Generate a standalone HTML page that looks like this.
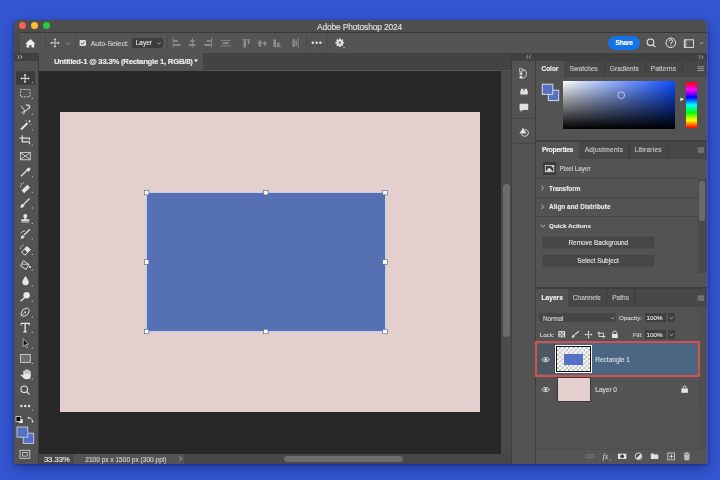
<!DOCTYPE html>
<html><head><meta charset="utf-8">
<style>
*{box-sizing:border-box;margin:0;padding:0}
html,body{width:720px;height:480px;overflow:hidden}
body{background:#3357d3;font-family:"Liberation Sans",sans-serif;position:relative}
.a{position:absolute}
#shadow{left:14px;top:20px;width:693.5px;height:443.75px;border-radius:5px 5px 0 0;box-shadow:0 5px 16px rgba(0,0,40,.32),0 1px 3px rgba(0,0,40,.35)}
#win{left:0;top:0;width:720px;height:480px;will-change:transform;background:#535353;clip-path:inset(20px 13px 16.25px 14px round 5px 5px 0 0)}
.t{position:absolute;white-space:nowrap;line-height:1;color:#e6e6e6;-webkit-text-stroke:0.14px currentColor}
svg{position:absolute;overflow:visible}
</style></head><body>
<div class="a" id="shadow"></div>
<div class="a" id="win">
  <!-- title bar -->
  <div class="a" style="left:14px;top:20px;width:694px;height:12px;background:#4e4e4e"></div>
  <div class="a" style="left:14px;top:31.6px;width:694px;height:1px;background:#393939"></div>
  <div class="a" style="left:18.5px;top:22px;width:7px;height:7px;border-radius:50%;background:#fe5f57"></div>
  <div class="a" style="left:30.5px;top:22px;width:7px;height:7px;border-radius:50%;background:#febc2e"></div>
  <div class="a" style="left:42.5px;top:22px;width:7px;height:7px;border-radius:50%;background:#28c840"></div>
  <div class="t" style="left:317px;top:22.80px;font-size:8.4px;color:#e0e0e0;letter-spacing:-0.12px">Adobe Photoshop 2024</div>

  <!-- options bar -->
  <div class="a" style="left:14px;top:32.6px;width:694px;height:20.4px;background:#545454"></div>
  <div class="a" style="left:14px;top:52.6px;width:694px;height:0.8px;background:#3c3c3c"></div>
  <div class="a" style="left:14px;top:32px;width:5.5px;height:21px;background:#4a4a4a"></div>
  <div class="t" style="left:90.7px;top:40.20px;font-size:7px;color:#cfcfcf;letter-spacing:0px">Auto-Select:</div>
  <div class="a" style="left:131.6px;top:38.4px;width:31.3px;height:9.4px;background:#3d3d3d;border-radius:2px"></div>
  <div class="t" style="left:135.7px;top:40.2px;font-size:6.5px;color:#e0e0e0">Layer</div>
  <div class="a" style="left:607.8px;top:35.7px;width:32.4px;height:14.3px;background:#1473e6;border-radius:7.2px"></div>
  <div class="t" style="left:615.5px;top:40.30px;font-size:6.6px;font-weight:700;color:#fff;letter-spacing:-0.2px">Share</div>

  <!-- left toolbar -->
  <div class="a" style="left:14px;top:53px;width:24px;height:411px;background:#535353"></div>
  <div class="a" style="left:14px;top:53px;width:24px;height:8px;background:#414141"></div>
  <div class="a" style="left:38px;top:53px;width:1px;height:411px;background:#3c3c3c"></div>

  <!-- tab bar -->
  <div class="a" style="left:39px;top:53.4px;width:473px;height:17.1px;background:#434343"></div>
  <div class="a" style="left:39px;top:53px;width:164px;height:17.5px;background:#535353"></div>
  <div class="t" style="left:54px;top:58.2px;font-size:7.7px;font-weight:700;color:#ececec;letter-spacing:-0.22px">Untitled-1 @ 33.3% (Rectangle 1, RGB/8) *</div>

  <!-- canvas -->
  <div class="a" style="left:39px;top:70.5px;width:462px;height:383.5px;background:#282828"></div>
  <div class="a" style="left:60px;top:112px;width:420px;height:300px;background:#e4cfcf"></div>
  <div class="a" style="left:146px;top:192px;width:239.5px;height:139.8px;background:#5571b4;border:1px solid #c4cdf0"></div>

  <!-- v scroll -->
  <div class="a" style="left:501px;top:70.5px;width:10px;height:383.5px;background:#4a4a4a"></div>
  <div class="a" style="left:502.5px;top:184px;width:7px;height:153px;border-radius:3.5px;background:#6c6c6c"></div>

  <!-- status bar -->
  <div class="a" style="left:39px;top:454px;width:472px;height:10px;background:#474747"></div>
  <div class="a" style="left:74px;top:454px;width:110px;height:10px;background:#535353"></div>
  <div class="a" style="left:284px;top:455.6px;width:119px;height:6.8px;border-radius:3.4px;background:#6c6c6c"></div>
  <div class="t" style="left:43.9px;top:456.3px;font-size:7.6px;color:#e8e8e8">33.33%</div>
  <div class="t" style="left:85.3px;top:456.8px;font-size:6.5px;color:#d0d0d0;letter-spacing:0.02px">2100 px x 1500 px (300 ppi)</div>

  <!-- narrow panel -->
  <div class="a" style="left:511px;top:53px;width:25px;height:411px;background:#535353"></div>
  <div class="a" style="left:511px;top:53px;width:1px;height:411px;background:#3e3e3e"></div>
  <div class="a" style="left:512px;top:53px;width:23.5px;height:7.5px;background:#414141"></div>
  <div class="a" style="left:535px;top:53px;width:1px;height:411px;background:#3e3e3e"></div>

  <!-- right panels -->
  <div class="a" style="left:536px;top:53px;width:171px;height:411px;background:#535353"></div>
  <div class="a" style="left:536px;top:53px;width:171px;height:7.5px;background:#414141"></div>
  <!-- color tabs -->
  <div class="a" style="left:536px;top:60.5px;width:171px;height:16.5px;background:#474747"></div>
  <div class="a" style="left:536px;top:60.5px;width:28px;height:16.5px;background:#535353"></div>
  <div class="a" style="left:536px;top:140px;width:171px;height:2px;background:#3f3f3f"></div>
  <!-- properties tabs -->
  <div class="a" style="left:536px;top:142px;width:171px;height:16.5px;background:#474747"></div>
  <div class="a" style="left:536px;top:142px;width:43px;height:16.5px;background:#535353"></div>
  <div class="a" style="left:536px;top:287px;width:171px;height:2px;background:#3f3f3f"></div>
  <!-- layers tabs -->
  <div class="a" style="left:536px;top:289px;width:171px;height:17.5px;background:#474747"></div>
  <div class="a" style="left:536px;top:289px;width:32px;height:17.5px;background:#535353"></div>
  <!-- color panel content -->
  <div class="t" style="left:541.6px;top:66.30px;font-size:6.4px;font-weight:700;color:#f0f0f0">Color</div>
  <div class="t" style="left:569.5px;top:66.30px;font-size:6.55px;color:#c4c4c4;-webkit-text-stroke:0.15px #c4c4c4">Swatches</div>
  <div class="t" style="left:609.7px;top:66.30px;font-size:6.55px;color:#c4c4c4;letter-spacing:0.1px;-webkit-text-stroke:0.15px #c4c4c4">Gradients</div>
  <div class="t" style="left:650.6px;top:66.30px;font-size:6.85px;color:#c4c4c4;-webkit-text-stroke:0.15px #c4c4c4">Patterns</div>
  <div class="a" style="left:563.2px;top:81.3px;width:112.2px;height:47.3px;background:linear-gradient(to bottom,rgba(0,0,0,0),#000),linear-gradient(to right,#fff,#0b4cff)"></div>
  <div class="a" style="left:685.8px;top:81.6px;width:11.6px;height:46.7px;background:linear-gradient(to bottom,#ff0000 0%,#ff00ff 16.7%,#0000ff 33.3%,#00ffff 50%,#00ff00 66.7%,#ffff00 83.3%,#ff0000 100%)"></div>
  <!-- properties content -->
  <div class="t" style="left:541.9px;top:146.80px;font-size:6.9px;font-weight:700;color:#f0f0f0;letter-spacing:-0.28px">Properties</div>
  <div class="t" style="left:584.7px;top:146.80px;font-size:6.6px;color:#c4c4c4;letter-spacing:0.22px;-webkit-text-stroke:0.15px #c4c4c4">Adjustments</div>
  <div class="t" style="left:634.7px;top:146.80px;font-size:6.6px;color:#c4c4c4;letter-spacing:0.2px;-webkit-text-stroke:0.15px #c4c4c4">Libraries</div>
  <div class="a" style="left:543.1px;top:161.9px;width:13.2px;height:12.9px;background:#3a3a3a;border-radius:1px"></div>
  <div class="t" style="left:559.4px;top:166.40px;font-size:6.3px;color:#d0d0d0">Pixel Layer</div>
  <div class="a" style="left:536px;top:178px;width:162px;height:1px;background:#474747"></div>
  <div class="a" style="left:536px;top:197px;width:162px;height:1px;background:#474747"></div>
  <div class="a" style="left:536px;top:216px;width:162px;height:1px;background:#474747"></div>
  <div class="t" style="left:549.1px;top:186.00px;font-size:6.4px;font-weight:700;color:#e8e8e8">Transform</div>
  <div class="t" style="left:549.1px;top:204.10px;font-size:6.3px;font-weight:700;color:#e8e8e8;letter-spacing:0.08px">Align and Distribute</div>
  <div class="t" style="left:549.1px;top:222.8px;font-size:6.25px;font-weight:700;color:#e8e8e8">Quick Actions</div>
  <div class="a" style="left:542.2px;top:235.5px;width:112.5px;height:13.8px;background:#464646;border:0.5px solid #4e4e4e;border-radius:1.5px"></div>
  <div class="a" style="left:542.2px;top:253.7px;width:112.5px;height:13.8px;background:#464646;border:0.5px solid #4e4e4e;border-radius:1.5px"></div>
  <div class="t" style="left:568.5px;top:239.90px;font-size:6.4px;color:#e0e0e0">Remove Background</div>
  <div class="t" style="left:577.3px;top:257.5px;font-size:6.5px;color:#e0e0e0">Select Subject</div>
  <div class="a" style="left:697.8px;top:179px;width:8.8px;height:94px;background:#4a4a4a"></div>
  <div class="a" style="left:699.4px;top:180.6px;width:5.6px;height:40.6px;background:#6a6a6a;border-radius:2.8px"></div>
  <!-- layers content -->
  <div class="t" style="left:541.6px;top:295.40px;font-size:6.6px;font-weight:700;color:#f0f0f0">Layers</div>
  <div class="t" style="left:572.8px;top:295.40px;font-size:6.6px;color:#c4c4c4;-webkit-text-stroke:0.15px #c4c4c4">Channels</div>
  <div class="t" style="left:612.2px;top:295.40px;font-size:6.6px;color:#c4c4c4;-webkit-text-stroke:0.15px #c4c4c4">Paths</div>
  <div class="a" style="left:539.1px;top:313.3px;width:76.9px;height:9px;background:#464646;border-radius:1px"></div>
  <div class="t" style="left:542.9px;top:315.9px;font-size:6.4px;color:#d0d0d0">Normal</div>
  <div class="t" style="left:618.9px;top:315px;font-size:6.25px;color:#d0d0d0">Opacity:</div>
  <div class="a" style="left:644.8px;top:313px;width:21.3px;height:8.6px;background:#3f3f3f"></div>
  <div class="a" style="left:667.5px;top:313px;width:7.6px;height:8.6px;background:#3f3f3f"></div>
  <div class="t" style="left:646.6px;top:315.3px;font-size:6.25px;color:#e0e0e0">100%</div>
  <div class="t" style="left:539.7px;top:331.8px;font-size:6.2px;color:#d0d0d0">Lock:</div>
  <div class="t" style="left:632.8px;top:332.4px;font-size:6.25px;color:#d0d0d0">Fill:</div>
  <div class="a" style="left:644.8px;top:329.6px;width:21.3px;height:9px;background:#3f3f3f"></div>
  <div class="a" style="left:667.5px;top:329.6px;width:7.6px;height:9px;background:#3f3f3f"></div>
  <div class="t" style="left:646.6px;top:332.1px;font-size:6.25px;color:#e0e0e0">100%</div>
  <div class="a" style="left:697.5px;top:307px;width:10px;height:142px;background:#505050"></div>
  <div class="a" style="left:536px;top:449px;width:172px;height:15px;background:#555555"></div>
  <div class="a" style="left:536px;top:448.6px;width:172px;height:0.8px;background:#4c4c4c"></div>
  <!-- layer rows -->
  <div class="a" style="left:536px;top:376.5px;width:162px;height:27.5px;background:#545454"></div>
  <div class="a" style="left:534.7px;top:341.3px;width:165.5px;height:35.5px;background:#4b6680;border:2.3px solid #d3524d"></div>
  <div class="a" style="left:537px;top:343.6px;width:17.7px;height:30.9px;background:#4d5864"></div>
  <div class="a" style="left:554.3px;top:343.6px;width:0.8px;height:30.9px;background:#3e4650"></div>
  <div class="a" style="left:554.3px;top:376.8px;width:0.8px;height:27.2px;background:#4e4e4e"></div>
  <div class="a" style="left:555.3px;top:345.3px;width:36.7px;height:27.4px;background:#fff"></div>
  <div class="a" style="left:556.3px;top:346.3px;width:34.7px;height:25.4px;border:1px solid #111;background-color:#fff;background-image:linear-gradient(45deg,#bdbdbd 25%,transparent 25%,transparent 75%,#bdbdbd 75%),linear-gradient(45deg,#bdbdbd 25%,transparent 25%,transparent 75%,#bdbdbd 75%);background-size:4.4px 4.4px;background-position:0 0,2.2px 2.2px"></div>
  <div class="a" style="left:564px;top:354px;width:18.7px;height:10.7px;background:#5571c4"></div>
  <div class="t" style="left:595.3px;top:357.40px;font-size:6.5px;color:#d8dde4">Rectangle 1</div>
  <div class="a" style="left:556.7px;top:377.3px;width:34px;height:24.3px;background:#e4cfcf;border:0.6px solid #3a3a3a"></div>
  <div class="t" style="left:595.3px;top:387.40px;font-size:6.5px;color:#d8d8d8">Layer 0</div>

  <svg width="720" height="480" viewBox="0 0 720 480" style="left:0;top:0">
    <!-- options bar icons -->
    <g stroke="#4a4a4a" stroke-width="1">
      <line x1="45.5" y1="34" x2="45.5" y2="51"/>
      <line x1="75.5" y1="34" x2="75.5" y2="51"/>
      <line x1="167.5" y1="34" x2="167.5" y2="51"/>
      <line x1="306.5" y1="34" x2="306.5" y2="51"/>
      <line x1="327.5" y1="34" x2="327.5" y2="51"/>
    </g>
    <path d="M25.3 43.7 L30.4 38.9 L35.5 43.7 L34.2 43.7 L34.2 47.6 L31.6 47.6 L31.6 45.2 L29.2 45.2 L29.2 47.6 L26.6 47.6 L26.6 43.7 Z" fill="#ececec"/>
    <g stroke="#dcdcdc" stroke-width="0.85" fill="none">
      <line x1="50.8" y1="42.9" x2="59.2" y2="42.9"/>
      <line x1="55" y1="38.7" x2="55" y2="47.1"/>
    </g>
    <g fill="#dcdcdc">
      <path d="M50.4 42.9 L52 41.5 L52 44.3Z"/><path d="M59.6 42.9 L58 41.5 L58 44.3Z"/>
      <path d="M55 38.3 L53.6 39.9 L56.4 39.9Z"/><path d="M55 47.5 L53.6 45.9 L56.4 45.9Z"/>
    </g>
    <polyline points="65.7,42.4 67.85,44.5 70,42.4" stroke="#9a9a9a" stroke-width="0.8" fill="none"/>
    <rect x="79.6" y="39.9" width="6.4" height="6.2" rx="1" fill="#dedede"/>
    <polyline points="81.1,43 82.4,44.3 84.6,41.7" stroke="#3a3a3a" stroke-width="0.9" fill="none"/>
    <polyline points="157.3,42.6 159,44.2 160.7,42.6" stroke="#bdbdbd" stroke-width="0.8" fill="none"/>
    <!-- align icons -->
    <g fill="#8e8e8e">
      <rect x="172.7" y="37.8" width="0.9" height="9.6"/><rect x="174" y="40.2" width="4" height="1.8"/><rect x="174" y="44.1" width="6.4" height="1.9"/>
      <rect x="192" y="38" width="0.9" height="9.6"/><rect x="190.4" y="40.2" width="4" height="1.8"/><rect x="189" y="44.1" width="6.4" height="1.9"/>
      <rect x="211.2" y="37.8" width="0.9" height="9.6"/><rect x="206.8" y="40.2" width="4" height="1.8"/><rect x="204.4" y="44.1" width="6.4" height="1.9"/>
      <rect x="220.6" y="39.9" width="10" height="0.9"/><rect x="222.5" y="42.1" width="6.2" height="1.7"/><rect x="220.6" y="45.4" width="10" height="0.9"/>
      <rect x="241.9" y="39.3" width="8.7" height="0.9"/><rect x="243.5" y="40.2" width="2.5" height="7.3"/><rect x="247.7" y="40.2" width="1.7" height="3.8"/>
      <rect x="257.3" y="42.6" width="9.5" height="0.9"/><rect x="258.7" y="40.4" width="2.5" height="6.2"/><rect x="263.7" y="41.5" width="2.5" height="4"/>
      <rect x="273" y="46.2" width="8.3" height="0.9"/><rect x="273.5" y="39.5" width="2.5" height="6.7"/><rect x="277.2" y="42.5" width="2.3" height="3.7"/>
      <rect x="297.7" y="37.9" width="0.9" height="10"/><rect x="292.5" y="39.2" width="2.2" height="7.8"/><rect x="295.4" y="40.6" width="1.6" height="5"/>
    </g>
    <g fill="#e2e2e2"><circle cx="312.8" cy="42.7" r="1.2"/><circle cx="316.6" cy="42.7" r="1.2"/><circle cx="320.4" cy="42.7" r="1.2"/></g>
    <g transform="translate(339.7 42.7)">
      <circle r="3" fill="#e6e6e6"/>
      <g fill="#e6e6e6">
        <rect x="-0.85" y="-4.3" width="1.7" height="8.6"/>
        <rect x="-0.85" y="-4.3" width="1.7" height="8.6" transform="rotate(45)"/>
        <rect x="-0.85" y="-4.3" width="1.7" height="8.6" transform="rotate(90)"/>
        <rect x="-0.85" y="-4.3" width="1.7" height="8.6" transform="rotate(135)"/>
      </g>
      <circle r="1.15" fill="#535353"/>
    </g>
    <path d="M343 47.3 L345.2 47.3 L344.1 48.6Z" fill="#d0d0d0"/>
    <!-- toolbar -->
    <rect x="16" y="71.3" width="19" height="13.4" rx="1.5" fill="#3c3c3c"/>
    <path d="M17.6 55.3 L19.4 57 L17.6 58.7 M20.4 55.3 L22.2 57 L20.4 58.7" stroke="#cfcfcf" stroke-width="0.8" fill="none"/>
    <g fill="#d6d6d6">
      <path d="M31.4 83.2 L32.8 81.8 L32.8 83.2Z"/>
      <path d="M31.4 98.9 L32.8 97.5 L32.8 98.9Z"/>
      <path d="M31.4 114.6 L32.8 113.2 L32.8 114.6Z"/>
      <path d="M31.4 130.3 L32.8 128.9 L32.8 130.3Z"/>
      <path d="M31.4 145.6 L32.8 144.2 L32.8 145.6Z"/>
      <path d="M31.4 177.2 L32.8 175.8 L32.8 177.2Z"/>
      <path d="M31.4 192.8 L32.8 191.4 L32.8 192.8Z"/>
      <path d="M31.4 208.5 L32.8 207.1 L32.8 208.5Z"/>
      <path d="M31.4 224 L32.8 222.6 L32.8 224Z"/>
      <path d="M31.4 239.6 L32.8 238.2 L32.8 239.6Z"/>
      <path d="M31.4 255 L32.8 253.6 L32.8 255Z"/>
      <path d="M31.4 270.7 L32.8 269.3 L32.8 270.7Z"/>
      <path d="M31.4 286.3 L32.8 284.9 L32.8 286.3Z"/>
      <path d="M31.4 301.8 L32.8 300.4 L32.8 301.8Z"/>
      <path d="M31.4 317.4 L32.8 316 L32.8 317.4Z"/>
      <path d="M31.4 333 L32.8 331.6 L32.8 333Z"/>
      <path d="M31.4 348.5 L32.8 347.1 L32.8 348.5Z"/>
      <path d="M31.4 364 L32.8 362.6 L32.8 364Z"/>
      <path d="M31.4 379.7 L32.8 378.3 L32.8 379.7Z"/>
      <path d="M31.4 410.8 L32.8 409.4 L32.8 410.8Z"/>
    </g>
    <!-- move -->
    <g stroke="#e4e4e4" stroke-width="1" fill="none"><line x1="21" y1="78.4" x2="29" y2="78.4"/><line x1="25" y1="74.4" x2="25" y2="82.4"/></g>
    <g fill="#e4e4e4"><path d="M20.4 78.4 L22 77 L22 79.8Z"/><path d="M29.6 78.4 L28 77 L28 79.8Z"/><path d="M25 73.8 L23.6 75.4 L26.4 75.4Z"/><path d="M25 83 L23.6 81.4 L26.4 81.4Z"/></g>
    <!-- marquee -->
    <rect x="20.5" y="89.6" width="9.5" height="7.2" fill="none" stroke="#dcdcdc" stroke-width="0.9" stroke-dasharray="1.8 1.2"/>
    <!-- lasso -->
    <path d="M25.8 105.2 Q29.8 104.6 29.7 107 Q29.6 108.8 27.4 109" fill="none" stroke="#e0e0e0" stroke-width="1.3"/>
    <path d="M21.2 105.8 L24.6 110.6 M21.4 112.8 L27.8 109.6 M23.6 114.4 L24.8 110.4" fill="none" stroke="#d8d8d8" stroke-width="1"/>
    <!-- magic wand -->
    <line x1="21" y1="129.5" x2="27.5" y2="123" stroke="#e0e0e0" stroke-width="2"/>
    <g stroke="#e0e0e0" stroke-width="0.8"><line x1="29.5" y1="120" x2="29.5" y2="122.5"/><line x1="28.2" y1="121.2" x2="30.8" y2="121.2"/><line x1="26" y1="120" x2="26" y2="121"/><line x1="30.5" y1="124.5" x2="31.3" y2="124.5"/></g>
    <!-- crop -->
    <path d="M22.3 135.3 L22.3 141.8 L29.5 141.8 L29.5 144.2 M19.5 138.2 L29.5 138.2 L29.5 140.3" fill="none" stroke="#e0e0e0" stroke-width="1.2"/>
    <!-- frame -->
    <rect x="20.5" y="152.4" width="9.8" height="7.4" fill="none" stroke="#d8d8d8" stroke-width="0.9"/>
    <path d="M21 153 L29.8 159.3 M29.8 153 L21 159.3" stroke="#d8d8d8" stroke-width="0.9"/>
    <!-- eyedropper -->
    <line x1="21" y1="176.3" x2="27" y2="170.3" stroke="#e0e0e0" stroke-width="1.3"/>
    <path d="M26 169.5 L29 167.3 L30.7 169 L28.5 172 Z" fill="#e0e0e0"/>
    <!-- healing -->
    <path d="M21.5 190.5 L27.3 184.7 L30 187.4 L24.2 193.2 Z" fill="#e4e4e4"/>
    <g fill="#e4e4e4"><circle cx="21.5" cy="184" r="0.7"/><circle cx="23.5" cy="182.8" r="0.6"/><circle cx="20.6" cy="186.3" r="0.6"/></g>
    <!-- brush -->
    <line x1="23.5" y1="204.5" x2="29.5" y2="198.5" stroke="#e4e4e4" stroke-width="1.3"/>
    <path d="M20.5 208 Q20.3 204.6 22.5 203.8 L24.5 205.5 Q23.8 207.8 20.5 208Z" fill="#e4e4e4"/>
    <!-- stamp -->
    <circle cx="25.3" cy="216" r="2" fill="#e4e4e4"/>
    <rect x="24.3" y="217" width="2" height="2.6" fill="#e4e4e4"/>
    <rect x="21.3" y="219.3" width="8" height="1.8" fill="#e4e4e4"/>
    <rect x="21.3" y="221.6" width="8" height="0.9" fill="#e4e4e4"/>
    <!-- history brush -->
    <line x1="24" y1="235" x2="30" y2="229.3" stroke="#e4e4e4" stroke-width="1.2"/>
    <path d="M20.8 239 Q20.8 235.7 22.8 235 L24.6 236.5 Q24 238.7 20.8 239Z" fill="#e4e4e4"/>
    <path d="M20.8 233.3 Q22 230.8 25 231" fill="none" stroke="#e4e4e4" stroke-width="0.8"/>
    <!-- eraser -->
    <path d="M21.5 252 L27 246.5 L30.3 249.8 L24.8 255.3 Z" fill="none" stroke="#e4e4e4" stroke-width="1"/>
    <path d="M24.3 249.2 L27 246.5 L30.3 249.8 L27.6 252.5 Z" fill="#e4e4e4"/>
    <g fill="#e4e4e4"><circle cx="21.3" cy="246" r="0.6"/><circle cx="23.3" cy="245" r="0.6"/><circle cx="20.5" cy="248.2" r="0.6"/></g>
    <!-- paint bucket -->
    <path d="M23.5 260.8 L29 264.5 L26 269.5 L20.5 265.8 Z" fill="none" stroke="#e0e0e0" stroke-width="1"/>
    <path d="M21.5 264 L28 264.5" stroke="#e0e0e0" stroke-width="0.8"/>
    <circle cx="30" cy="267" r="1.1" fill="#e0e0e0"/>
    <!-- blur drop -->
    <path d="M25.5 276 Q22.3 280.5 22.3 282.3 Q22.3 285.3 25.5 285.3 Q28.7 285.3 28.7 282.3 Q28.7 280.5 25.5 276Z" fill="#e6e6e6"/>
    <!-- dodge -->
    <circle cx="26.6" cy="295.3" r="3.2" fill="#e6e6e6"/>
    <line x1="24.6" y1="297.5" x2="20.6" y2="301.3" stroke="#e6e6e6" stroke-width="1.2"/>
    <!-- pen -->
    <path d="M20.8 314 L22.8 309.8 L27.2 307.8 L29.6 310.2 L27.6 314.6 L23.4 316.6 Z" fill="none" stroke="#e0e0e0" stroke-width="1"/>
    <circle cx="25.2" cy="312.2" r="0.9" fill="#e0e0e0"/>
    <line x1="20.8" y1="316.6" x2="24.3" y2="313.1" stroke="#e0e0e0" stroke-width="0.8"/>
    <!-- type -->
    <path d="M21 323.4 L29.2 323.4 L29.2 325.2 M21 323.4 L21 325.2 M25.1 323.4 L25.1 331.8 M23.4 331.8 L26.8 331.8" fill="none" stroke="#e6e6e6" stroke-width="1.3"/>
    <!-- path selection -->
    <path d="M23.2 338.8 L28.6 344 L26.2 344.2 L27.6 347.2 L26.3 347.8 L24.9 344.8 L23.2 346.5 Z" fill="#111" stroke="#d8d8d8" stroke-width="0.7"/>
    <!-- rectangle -->
    <rect x="20.5" y="354.4" width="9.8" height="8" fill="#6e6e6e" stroke="#d0d0d0" stroke-width="0.9"/>
    <!-- hand -->
    <g fill="#e8e8e8">
      <rect x="23.4" y="370.6" width="1.5" height="5" rx="0.75"/>
      <rect x="25.3" y="369.3" width="1.5" height="5.5" rx="0.75"/>
      <rect x="27.2" y="369.5" width="1.5" height="5.5" rx="0.75"/>
      <rect x="29.1" y="370.8" width="1.5" height="5" rx="0.75"/>
      <path d="M23.4 374 L30.6 374 L30.6 376.6 Q30.6 379.3 27.6 379.3 L26.2 379.3 Q24.6 379.3 23.6 378 L20.6 375.2 Q20.3 374.6 21 374.4 Q21.8 374.3 23.4 375.6 Z"/>
    </g>
    <!-- zoom -->
    <circle cx="24.2" cy="389.3" r="3.3" fill="none" stroke="#e0e0e0" stroke-width="1.1"/>
    <line x1="26.6" y1="391.7" x2="29.6" y2="394.7" stroke="#e0e0e0" stroke-width="1.2"/>
    <!-- more -->
    <g fill="#e6e6e6"><circle cx="21.4" cy="406" r="1.2"/><circle cx="25.3" cy="406" r="1.2"/><circle cx="29.1" cy="406" r="1.2"/></g>
    <!-- mini fg/bg -->
    <rect x="18.3" y="418.8" width="4.8" height="4.8" fill="#eee" stroke="#222" stroke-width="0.6"/>
    <rect x="16" y="416.6" width="4.8" height="4.8" fill="#000" stroke="#eee" stroke-width="0.7"/>
    <path d="M28 417.8 Q32.6 417.6 32.6 422" fill="none" stroke="#e0e0e0" stroke-width="0.9"/>
    <path d="M27.4 417.8 L29 416.4 L29 419.2Z M32.6 422.8 L31.2 421.2 L34 421.2Z" fill="#e0e0e0"/>
    <!-- fg/bg colors -->
    <rect x="23.2" y="433.2" width="10.5" height="10.2" fill="#5470c8" stroke="#c9cde0" stroke-width="0.9"/>
    <rect x="17" y="427" width="10.8" height="10.2" fill="#5470c8" stroke="#c9cde0" stroke-width="0.9"/>
    <!-- screen mode -->
    <rect x="20" y="450.3" width="9.8" height="8" fill="none" stroke="#cfcfcf" stroke-width="0.9"/>
    <rect x="22.5" y="452.5" width="4.8" height="3.6" fill="none" stroke="#cfcfcf" stroke-width="0.8"/>
    <polyline points="179.6,456.6 181.6,458.6 179.6,460.6" stroke="#cfcfcf" stroke-width="0.8" fill="none"/>
    <!-- handles -->
    <g fill="#f4f8ff" stroke="#56607e" stroke-width="0.6">
      <rect x="144.3" y="190.3" width="4.6" height="4.6"/>
      <rect x="263.5" y="190.3" width="4.6" height="4.6"/>
      <rect x="382.7" y="190.3" width="4.6" height="4.6"/>
      <rect x="144.3" y="259.7" width="4.6" height="4.6"/>
      <rect x="382.7" y="259.7" width="4.6" height="4.6"/>
      <rect x="144.3" y="329.2" width="4.6" height="4.6"/>
      <rect x="263.5" y="329.2" width="4.6" height="4.6"/>
      <rect x="382.7" y="329.2" width="4.6" height="4.6"/>
    </g>
    <!-- narrow panel icons -->
    <path d="M528 55.3 L526.2 57 L528 58.7 M530.8 55.3 L529 57 L530.8 58.7" stroke="#bdbdbd" stroke-width="0.7" fill="none"/>
    <path d="M698.6 55.3 L700.4 57 L698.6 58.7 M701.4 55.3 L703.2 57 L701.4 58.7" stroke="#bdbdbd" stroke-width="0.7" fill="none"/>
    <line x1="512" y1="118.3" x2="535" y2="118.3" stroke="#474747" stroke-width="1"/>
    <line x1="512" y1="143.3" x2="535" y2="143.3" stroke="#474747" stroke-width="1"/>
    <g fill="#e0e0e0">
      <rect x="519.6" y="68.8" width="2.8" height="2.4" fill="none" stroke="#e0e0e0" stroke-width="0.7"/>
      <rect x="519.6" y="72.4" width="2.8" height="2.4"/>
      <rect x="519.6" y="75.8" width="2.8" height="2.8"/>
      <path d="M520.3 90.6 L521 90.6 L521 88.7 L523.4 88.7 L523.4 90.6 L524.6 90.6 L524.6 88.7 L527 88.7 L527 90.6 L527.8 90.6 L527.8 94.5 L520.3 94.5 Z"/>
      <path d="M519.6 103.8 L528.2 103.8 L528.2 110 L522.6 110 L520.6 112.2 L520.6 110 L519.6 110 Z"/>
      <path d="M523 127.8 L526.6 133.6 L519.4 133.6 Z"/>
    </g>
    <path d="M524 70 Q526.5 70.5 526.5 73.6 Q526.5 77.6 522.8 78.4" fill="none" stroke="#e0e0e0" stroke-width="0.9"/>
    <path d="M523.2 69 L525 70 L523.6 71.4Z" fill="#e0e0e0"/>
    <path d="M524.6 129.6 Q528.6 130 528.4 133 Q528.2 136.4 524.8 136.3 Q522 136.2 521.6 134" fill="none" stroke="#e0e0e0" stroke-width="0.9"/>
    <!-- panel menu icons -->
    <g fill="#8e8e8e">
      <rect x="697.5" y="66.2" width="6.5" height="1.1"/><rect x="697.5" y="68.1" width="6.5" height="1.1"/><rect x="697.5" y="70" width="6.5" height="1.1"/>
      <rect x="697.5" y="147.6" width="6.5" height="1.1"/><rect x="697.5" y="149.5" width="6.5" height="1.1"/><rect x="697.5" y="151.4" width="6.5" height="1.1"/>
      <rect x="697.5" y="295.6" width="6.5" height="1.1"/><rect x="697.5" y="297.5" width="6.5" height="1.1"/><rect x="697.5" y="299.4" width="6.5" height="1.1"/>
    </g>
    <g stroke="#3d3d3d" stroke-width="1">
      <line x1="604.7" y1="61" x2="604.7" y2="76.5"/><line x1="645.6" y1="61" x2="645.6" y2="76.5"/><line x1="682.5" y1="61" x2="682.5" y2="76.5"/>
      <line x1="629.4" y1="142.5" x2="629.4" y2="158"/><line x1="667.5" y1="142.5" x2="667.5" y2="158"/>
      <line x1="606.6" y1="289.5" x2="606.6" y2="306.5"/><line x1="634.7" y1="289.5" x2="634.7" y2="306.5"/>
    </g>
    <!-- color panel extras -->
    <circle cx="621.2" cy="95.2" r="3.4" fill="none" stroke="#d8d8e8" stroke-width="0.8"/>
    <path d="M680.4 97.4 L684.2 99.3 L680.4 101.2 Z" fill="#e8e8e8"/>
    <rect x="548.3" y="90.2" width="10.4" height="10.4" fill="#5670c8" stroke="#d6dae8" stroke-width="1"/>
    <rect x="542.3" y="84.2" width="10.5" height="10.2" fill="#5670c8" stroke="#d6dae8" stroke-width="1"/>
    <!-- pixel layer icon -->
    <rect x="545.3" y="165.4" width="8.5" height="6.4" fill="none" stroke="#e0e0e0" stroke-width="0.8"/>
    <path d="M545.8 171.5 L549.2 167.6 L552.8 171.5 Z" fill="#e0e0e0"/>
    <rect x="551.8" y="166" width="1.6" height="1.4" fill="#e0e0e0"/>
    <!-- chevrons properties -->
    <polyline points="541.6,186 543.5,188.2 541.6,190.4" stroke="#d0d0d0" stroke-width="0.8" fill="none"/>
    <polyline points="541.6,204.6 543.5,206.8 541.6,209" stroke="#d0d0d0" stroke-width="0.8" fill="none"/>
    <polyline points="540.6,224.8 542.9,227 545.2,224.8" stroke="#d0d0d0" stroke-width="0.8" fill="none"/>
    <!-- layers options chevrons -->
    <polyline points="611.2,317.6 612.6,319 614,317.6" stroke="#c8c8c8" stroke-width="0.8" fill="none"/>
    <polyline points="669.8,317.4 671.3,318.8 672.8,317.4" stroke="#c8c8c8" stroke-width="0.8" fill="none"/>
    <polyline points="669.8,334.2 671.3,335.6 672.8,334.2" stroke="#c8c8c8" stroke-width="0.8" fill="none"/>
    <!-- lock icons -->
    <rect x="558.3" y="331.1" width="6.8" height="6.2" fill="#e0e0e0"/>
    <g fill="#535353"><rect x="559.4" y="332.2" width="1.5" height="1.5"/><rect x="562.4" y="332.2" width="1.5" height="1.5"/><rect x="560.9" y="333.7" width="1.5" height="1.5"/><rect x="559.4" y="335.2" width="1.5" height="1.5"/><rect x="562.4" y="335.2" width="1.5" height="1.5"/></g>
    <line x1="575" y1="334.5" x2="579" y2="331.2" stroke="#e0e0e0" stroke-width="1.1"/>
    <path d="M571.7 338 Q571.6 335.3 573.5 334.6 L575 335.8 Q574.6 337.8 571.7 338Z" fill="#e0e0e0"/>
    <g stroke="#e0e0e0" stroke-width="0.8"><line x1="585" y1="334.6" x2="592" y2="334.6"/><line x1="588.5" y1="331.1" x2="588.5" y2="338.1"/></g>
    <g fill="#e0e0e0"><path d="M584.6 334.6 L585.9 333.5 L585.9 335.7Z"/><path d="M592.4 334.6 L591.1 333.5 L591.1 335.7Z"/><path d="M588.5 330.7 L587.4 332 L589.6 332Z"/><path d="M588.5 338.5 L587.4 337.2 L589.6 337.2Z"/></g>
    <path d="M599 331.5 L599 336.5 L605.4 336.5 M597.3 333.2 L603.6 333.2 L603.6 338.2" fill="none" stroke="#e0e0e0" stroke-width="0.9"/>
    <path d="M612.9 334 L612.9 332.6 Q612.9 331 614.8 331 Q616.7 331 616.7 332.6 L616.7 334" fill="none" stroke="#e0e0e0" stroke-width="0.9"/>
    <rect x="611.9" y="334" width="5.9" height="4" fill="#e0e0e0"/>
    <!-- eyes -->
    <g fill="none" stroke="#e4e4e4" stroke-width="0.9">
      <path d="M541.8 359.7 Q545.7 355.4 549.6 359.7 Q545.7 364 541.8 359.7Z"/>
      <path d="M541.8 389.6 Q545.7 385.3 549.6 389.6 Q545.7 393.9 541.8 389.6Z"/>
    </g>
    <circle cx="545.7" cy="359.7" r="1.3" fill="#e4e4e4"/>
    <circle cx="545.7" cy="389.6" r="1.3" fill="#e4e4e4"/>
    <!-- layer lock -->
    <path d="M683.2 388.6 L683.2 387.6 Q683.2 385.9 684.6 385.9 Q686 385.9 686 387.6 L686 388.6" fill="none" stroke="#e8e8e8" stroke-width="0.9"/>
    <rect x="681.4" y="388.5" width="6.5" height="4.3" fill="#e8e8e8"/>
    <!-- bottom layer icons -->
    <g fill="none" stroke="#7a7a7a" stroke-width="0.9"><rect x="586" y="454.6" width="3.8" height="3.2" rx="1.2"/><rect x="590.3" y="454.6" width="3.8" height="3.2" rx="1.2"/></g>
    <text x="602.6" y="459" font-family="Liberation Serif" font-style="italic" font-size="8" fill="#d8d8d8">fx</text>
    <path d="M609.6 459.6 L611 459.6 L610.3 460.4Z" fill="#d8d8d8"/>
    <rect x="618" y="453.7" width="8.3" height="5.2" fill="#e8e8e8"/>
    <circle cx="622.15" cy="456.3" r="1.9" fill="#3d3d3d"/>
    <circle cx="638.5" cy="456.2" r="3.3" fill="none" stroke="#e0e0e0" stroke-width="0.9"/>
    <path d="M640.8 453.9 A3.3 3.3 0 0 1 636.2 458.5 Z" fill="#e0e0e0"/>
    <path d="M641 459.8 L642.4 459.8 L641.7 460.6Z" fill="#d8d8d8"/>
    <path d="M650.8 453.5 L653.8 453.5 L654.6 454.4 L658.3 454.4 L658.3 459 L650.8 459 Z" fill="#e0e0e0"/>
    <rect x="667.8" y="453" width="6.8" height="6.8" fill="none" stroke="#d8d8d8" stroke-width="0.8"/>
    <path d="M671.3 454.5 L671.3 458.3 M669.4 456.4 L673.2 456.4" stroke="#e0e0e0" stroke-width="0.9"/>
    <path d="M683.5 453.8 L690.2 453.8 M685.6 453.8 L685.6 452.7 L688.1 452.7 L688.1 453.8 M684.3 454.7 L684.9 460 L688.8 460 L689.4 454.7 Z" fill="#bdbdbd" stroke="#bdbdbd" stroke-width="0.7"/>
    <!-- right options -->
    <circle cx="650.5" cy="42.3" r="3.3" fill="none" stroke="#e6e6e6" stroke-width="1.1"/>
    <line x1="652.9" y1="44.7" x2="655.3" y2="47.1" stroke="#e6e6e6" stroke-width="1.2"/>
    <circle cx="670.8" cy="42.8" r="4.8" fill="none" stroke="#e6e6e6" stroke-width="1"/>
    <path d="M669.2 41.4 Q669.2 39.6 670.9 39.6 Q672.6 39.6 672.6 41.2 Q672.6 42.3 670.9 43 L670.9 44.2" fill="none" stroke="#e6e6e6" stroke-width="0.9"/>
    <circle cx="670.9" cy="45.8" r="0.55" fill="#e6e6e6"/>
    <rect x="684.3" y="39.8" width="9.2" height="7.6" fill="none" stroke="#e6e6e6" stroke-width="0.9"/>
    <rect x="684.3" y="39.8" width="2.2" height="7.6" fill="#e6e6e6" opacity=".55"/>
    <polyline points="700.2,42.2 701.7,43.6 703.2,42.2" stroke="#cfcfcf" stroke-width="0.8" fill="none"/>
  </svg>
</div>
</body></html>
